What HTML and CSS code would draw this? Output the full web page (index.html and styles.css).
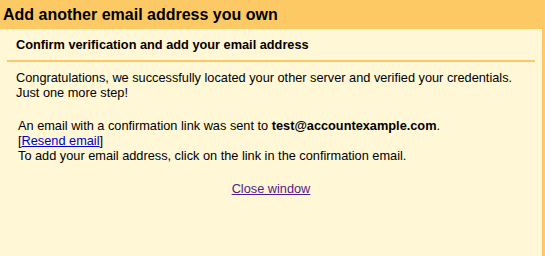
FILE: index.html
```html
<!DOCTYPE html>
<html>
<head>
<meta charset="utf-8">
<link rel="stylesheet" href="styles.css">
</head>
<body>
<div class="window">
  <div class="header">Add another email address you own</div>
  <div class="content">
    <div class="subtitle">Confirm verification and add your email address</div>
    <div class="message">Congratulations, we successfully located your other server and verified your credentials.<br>Just one more step!</div>
    <div class="notice">An email with a confirmation link was sent to <b>test@accountexample.com</b>.<br>[<a class="link" href="#">Resend email</a>]<br>To add your email address, click on the link in the confirmation email.</div>
    <div class="close"><a class="visited" href="#">Close window</a></div>
  </div>
</div>
</body>
</html>
```
FILE: styles.css
```css
html, body {
  margin: 0;
  padding: 0;
  background: #fff7d6;
}
body {
  font-family: "Liberation Sans", Arial, sans-serif;
  color: #000;
  font-size: 12.75px;
  line-height: 15px;
}
.window {
  width: 542px;
  height: 256px;
  border-right: 3px solid #fdc964;
  background: #fff7d6;
}
.header {
  height: 29px;
  box-sizing: border-box;
  padding: 1px 0 0 3px;
  background: #fdc964;
  font-size: 16px;
  font-weight: bold;
  line-height: 28px;
}
.content {
  padding: 0 7px;
}
.subtitle {
  padding: 8px 0 8px 9px;
  border-bottom: 2px solid #fdc964;
  font-weight: bold;
}
.message {
  margin-top: 8px;
  padding-left: 9px;
}
.notice {
  margin-top: 18px;
  padding-left: 11px;
}
.close {
  margin-top: 18px;
  text-align: center;
}
.link {
  color: #0000cc;
}
.visited {
  color: #551a8b;
}
```
